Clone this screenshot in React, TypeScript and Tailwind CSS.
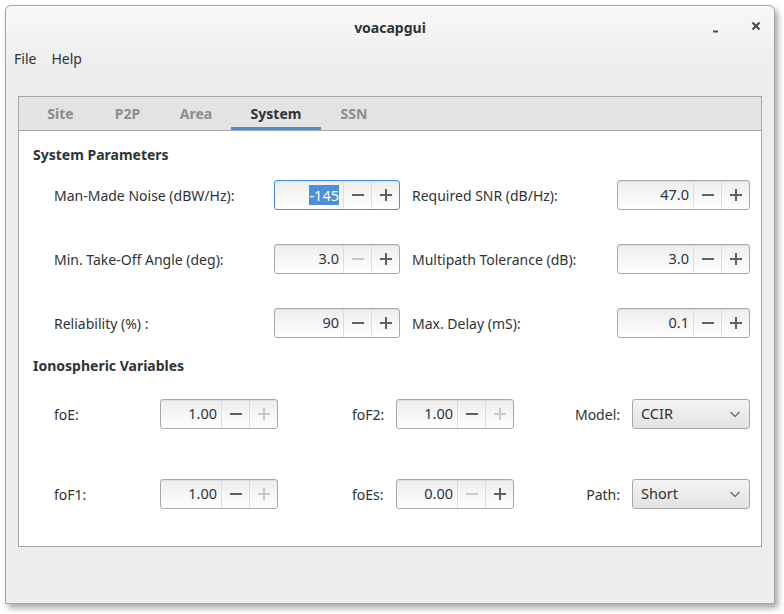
import type { ReactNode } from 'react'

const font = { fontFamily: '"Noto Sans", "DejaVu Sans", sans-serif' }

function Minus({ off }: { off?: boolean }) {
  return (
    <svg width="12" height="12" viewBox="0 0 12 12">
      <path d="M0 6h12" stroke={off ? '#c8c8c8' : '#5d6163'} strokeWidth="2" />
    </svg>
  )
}

function Plus({ off }: { off?: boolean }) {
  return (
    <svg width="12" height="12" viewBox="0 0 12 12">
      <path d="M0 6h12M6 0v12" stroke={off ? '#c8c8c8' : '#5d6163'} strokeWidth="2" />
    </svg>
  )
}

interface SpinProps {
  value: string
  width: string
  minusOff?: boolean
  plusOff?: boolean
  focused?: boolean
}

function Spin({ value, width, minusOff, plusOff, focused }: SpinProps) {
  return (
    <div
      className={`flex h-[30px] ${width} rounded-[3px] border bg-gradient-to-b from-[#ededed] to-white shadow-[inset_0_1px_1px_rgba(0,0,0,0.06)] ${
        focused ? 'border-[#4a90d9]' : 'border-[#a9a9a9]'
      }`}
    >
      <div className="flex flex-1 items-center justify-end pr-[4px] text-[14.5px] text-[#2e3436]">
        {focused ? <span className="bg-[#4a90d9] leading-[20px] text-white">{value}</span> : value}
      </div>
      <div className="flex w-[28px] items-center justify-center border-l border-[#dcdcdc]">
        <Minus off={minusOff} />
      </div>
      <div className="flex w-[28px] items-center justify-center border-l border-[#dcdcdc]">
        <Plus off={plusOff} />
      </div>
    </div>
  )
}

function Combo({ value }: { value: string }) {
  return (
    <div className="flex h-[30px] w-[118px] items-center justify-between rounded-[3px] border border-[#a9a9a9] bg-gradient-to-b from-[#f4f4f4] to-[#e2e2e2] pl-[8px] pr-[8px] text-[14.5px] text-[#2e3436]">
      <span>{value}</span>
      <svg width="12" height="12" viewBox="0 0 12 12">
        <path d="M1.5 4l4.5 4.5L10.5 4" fill="none" stroke="#6d7173" strokeWidth="1.4" />
      </svg>
    </div>
  )
}

function Label({ children, className = '' }: { children: ReactNode; className?: string }) {
  return <div className={`flex items-center text-[14px] text-[#2e3436] ${className}`}>{children}</div>
}

const tabs = [
  { name: 'Site', w: 'w-[67px]' },
  { name: 'P2P', w: 'w-[67px]' },
  { name: 'Area', w: 'w-[70px]' },
  { name: 'System', w: 'w-[90px]', active: true },
  { name: 'SSN', w: 'w-[66px]' },
]

export default function App() {
  return (
    <div className="h-[614px] w-[784px] overflow-hidden bg-white pl-[5px] pt-[5px]" style={font}>
      <div className="flex h-[599px] w-[770px] flex-col rounded-t-[6px] border border-[#a6a6a6] bg-[#ededed] shadow-[3px_4px_6px_rgba(0,0,0,0.35)]">
        {/* title + menu */}
        <div className="rounded-t-[6px] bg-gradient-to-b from-[#f8f8f8] to-[#ededed]">
          <div className="relative flex h-[42px] items-center justify-center">
            <span className="text-[14px] font-bold text-[#2e3436]">voacapgui</span>
            <svg className="absolute left-[706px] top-[19px]" width="8" height="8" viewBox="0 0 8 8">
              <path d="M1 6.5h5" stroke="#4a4f51" strokeWidth="2" />
            </svg>
            <svg className="absolute left-[745px] top-[15px]" width="10" height="10" viewBox="0 0 10 10">
              <path d="M1.5 1.5l7 7M8.5 1.5l-7 7" stroke="#4a4f51" strokeWidth="2.2" />
            </svg>
          </div>
          <div className="flex h-[20px] items-center gap-[15px] pl-[8px] text-[14px] text-[#2e3436]">
            <span>File</span>
            <span>Help</span>
          </div>
        </div>

        {/* notebook */}
        <div className="mx-[12px] mt-[28px] flex h-[451px] flex-col border border-[#a6a6a6] bg-white">
          <div className="flex h-[34px] border-b border-[#a6a6a6] bg-[#e3e3e3] pl-[8px]">
            {tabs.map((t) => (
              <div
                key={t.name}
                className={`flex items-center justify-center text-[14px] font-bold ${t.w} ${
                  t.active ? 'border-b-[3px] border-[#4a90d9] pt-[3px] text-[#2e3436]' : 'text-[#8b8e8f]'
                }`}
              >
                {t.name}
              </div>
            ))}
          </div>

          <div className="flex flex-col">
            <div className="ml-[14px] mt-[14px] h-[20px] text-[14px] font-bold leading-[20px] text-[#2e3436]">
              System Parameters
            </div>
            <div className="ml-[35px] mt-[15px] grid grid-cols-[220px_126px_217px_133px] gap-y-[34px]">
              <Label>Man-Made Noise (dBW/Hz):</Label>
              <Spin value="-145" width="w-[126px]" focused />
              <Label className="pl-[12px]">Required SNR (dB/Hz):</Label>
              <Spin value="47.0" width="w-[133px]" />

              <Label>Min. Take-Off Angle (deg):</Label>
              <Spin value="3.0" width="w-[126px]" minusOff />
              <Label className="pl-[12px]">Multipath Tolerance (dB):</Label>
              <Spin value="3.0" width="w-[133px]" />

              <Label>Reliability (%) :</Label>
              <Spin value="90" width="w-[126px]" />
              <Label className="pl-[12px]">Max. Delay (mS):</Label>
              <Spin value="0.1" width="w-[133px]" />
            </div>

            <div className="ml-[14px] mt-[18px] h-[20px] text-[14px] font-bold leading-[20px] text-[#2e3436]">
              Ionospheric Variables
            </div>
            <div className="ml-[35px] mt-[23px] grid grid-cols-[106px_118px_118px_118px_118px_118px] gap-y-[50px]">
              <Label>foE:</Label>
              <Spin value="1.00" width="w-[118px]" plusOff />
              <Label className="pl-[74px]">foF2:</Label>
              <Spin value="1.00" width="w-[118px]" plusOff />
              <Label className="justify-end pr-[12px]">Model:</Label>
              <Combo value="CCIR" />

              <Label>foF1:</Label>
              <Spin value="1.00" width="w-[118px]" plusOff />
              <Label className="pl-[74px]">foEs:</Label>
              <Spin value="0.00" width="w-[118px]" minusOff />
              <Label className="justify-end pr-[12px]">Path:</Label>
              <Combo value="Short" />
            </div>
          </div>
        </div>
      </div>
    </div>
  )
}
